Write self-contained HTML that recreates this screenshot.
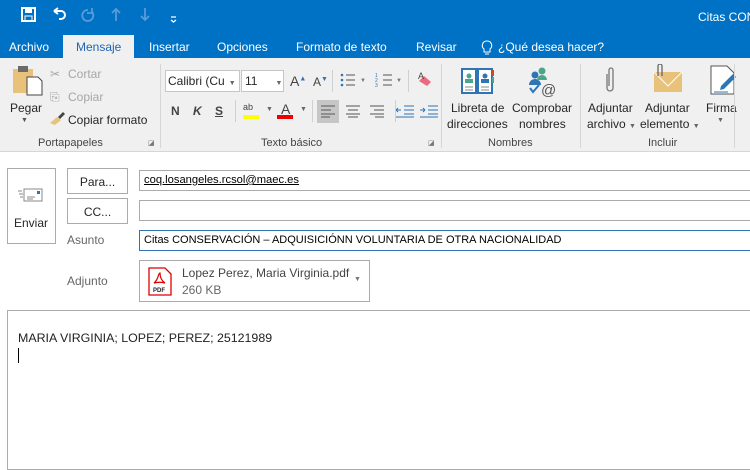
<!DOCTYPE html>
<html><head><meta charset="utf-8"><style>
*{margin:0;padding:0;box-sizing:border-box}
body{width:750px;height:460px;overflow:hidden;background:#fff;font-family:"Liberation Sans","DejaVu Sans",sans-serif;font-size:12px;color:#262626;position:relative}
.a{position:absolute;white-space:nowrap}
.top{left:0;top:0;width:750px;height:58px;background:#0072c6}
.tab{color:#fff;font-size:12px;top:40px}
.rib{left:0;top:58px;width:750px;height:94px;background:#f0f0f0;border-bottom:1px solid #d6d6d6}
.sep{width:1px;background:#d6d6d6;top:64px;height:84px}
.gl{color:#444;font-size:11px;top:137px}
.btn{border:1px solid #ababab;background:#fff}
.fld{border:1px solid #ababab;border-right:none;background:#fff}
.lbl{color:#666;font-size:12px}
.dis{color:#a6a6a6}
</style></head><body>
<div class="a top"></div>
<svg class="a" style="left:20px;top:6px" width="160" height="20">
<rect x="2" y="2" width="13" height="13" fill="none" stroke="#fff" stroke-width="2"/><rect x="5" y="2" width="7" height="5" fill="#fff"/><rect x="5" y="10" width="7" height="5" fill="none" stroke="#fff" stroke-width="1"/>
<path d="M34 5 l4 -3 M34 5 l4 3 M34 5 h7 a4 4 0 0 1 0 8 h-2" fill="none" stroke="#fff" stroke-width="2"/>
<path d="M68 4 a5.5 5.5 0 1 0 4 2 M72 2 v5 h-5" fill="none" stroke="#5a9bd8" stroke-width="1.8"/>
<path d="M96 15 V3 M92 7 l4 -4 4 4" fill="none" stroke="#5a9bd8" stroke-width="1.8"/>
<path d="M125 2 V14 M121 10 l4 4 4 -4" fill="none" stroke="#5a9bd8" stroke-width="1.8"/>
<path d="M151 11 h5 M151 14 l2.5 2 2.5 -2" fill="none" stroke="#fff" stroke-width="1.3"/>
</svg>
<div class="a" style="left:698px;top:10px;color:#fff;font-size:12px">Citas CON</div>
<div class="a" style="left:63px;top:35px;width:71px;height:24px;background:#f0f0f0"></div>
<div class="a tab" style="left:9px">Archivo</div>
<div class="a tab" style="left:76px;color:#1e64b4">Mensaje</div>
<div class="a tab" style="left:149px">Insertar</div>
<div class="a tab" style="left:217px">Opciones</div>
<div class="a tab" style="left:296px">Formato de texto</div>
<div class="a tab" style="left:416px">Revisar</div>
<svg class="a" style="left:481px;top:40px" width="12" height="15"><path d="M6 1 a4.5 4.5 0 0 0 -3 8 v3 h6 v-3 a4.5 4.5 0 0 0 -3 -8z M4 14 h4" fill="none" stroke="#fff" stroke-width="1"/></svg>
<div class="a tab" style="left:498px">¿Qué desea hacer?</div>
<div class="a rib"></div>
<svg class="a" style="left:12px;top:64px" width="32" height="34"><rect x="1" y="5" width="20" height="24" fill="#e8c27a"/><rect x="6" y="2" width="10" height="6" fill="#6b6b6b"/><path d="M15 13 h11 l4 4 v14 h-15z" fill="#fff" stroke="#444"/></svg>
<div class="a" style="left:10px;top:101px;font-size:12px">Pegar</div>
<div class="a" style="left:21px;top:117px;font-size:7px;color:#555">▼</div>
<div class="a dis" style="left:50px;top:67px">✂</div>
<div class="a dis" style="left:68px;top:67px">Cortar</div>
<div class="a dis" style="left:50px;top:90px">⎘</div>
<div class="a dis" style="left:68px;top:90px">Copiar</div>
<svg class="a" style="left:49px;top:111px" width="16" height="14"><path d="M1 12 l7 -6 4 3 -6 5z" fill="#e8c27a"/><path d="M9 6 l5 -5 2 2 -5 5z" fill="#444"/></svg>
<div class="a" style="left:68px;top:113px">Copiar formato</div>
<div class="a gl" style="left:38px">Portapapeles</div>
<div class="a" style="left:148px;top:139px;font-size:7px;color:#777">◪</div>
<div class="a sep" style="left:160px"></div>
<div class="a" style="left:165px;top:70px;width:75px;height:22px;background:#fff;border:1px solid #c6c6c6;font-size:12px;padding:3px 2px">Calibri (Cu<span style="font-size:7px;color:#666;margin-left:4px">▼</span></div>
<div class="a" style="left:241px;top:70px;width:43px;height:22px;background:#fff;border:1px solid #c6c6c6;font-size:12px;padding:3px 3px">11<span style="font-size:7px;color:#666;margin-left:18px">▼</span></div>
<div class="a" style="left:290px;top:73px;font-size:14px;color:#444">A<sup style="font-size:7px;color:#2e75b6">▲</sup></div>
<div class="a" style="left:313px;top:75px;font-size:12px;color:#444">A<sup style="font-size:7px;color:#2e75b6">▼</sup></div>
<div class="a" style="left:332px;top:70px;width:1px;height:22px;background:#d0d0d0"></div>
<svg class="a" style="left:340px;top:72px" width="64" height="18"><g fill="#2e75b6"><circle cx="2" cy="3" r="1.3"/><circle cx="2" cy="8" r="1.3"/><circle cx="2" cy="13" r="1.3"/></g><path d="M6 3h9M6 8h9M6 13h9M43 3h9M43 8h9M43 13h9" stroke="#555"/><text x="20" y="10" font-size="6" fill="#777">▼</text><text x="35" y="5" font-size="5" fill="#2e75b6">1</text><text x="35" y="10" font-size="5" fill="#2e75b6">2</text><text x="35" y="15" font-size="5" fill="#2e75b6">3</text><text x="56" y="10" font-size="6" fill="#777">▼</text></svg>
<div class="a" style="left:408px;top:70px;width:1px;height:22px;background:#d0d0d0"></div>
<svg class="a" style="left:416px;top:70px" width="18" height="18"><path d="M3 11 l5 -5 7 6 -4 4z" fill="#ea6a80"/><text x="2" y="9" font-size="9" fill="#444" font-family="Liberation Sans">A</text></svg>
<div class="a" style="left:171px;top:104px;font-weight:bold;color:#444">N</div>
<div class="a" style="left:193px;top:104px;font-weight:bold;font-style:italic;color:#444">K</div>
<div class="a" style="left:215px;top:104px;font-weight:bold;text-decoration:underline;color:#444">S</div>
<div class="a" style="left:235px;top:100px;width:1px;height:22px;background:#d0d0d0"></div>
<div class="a" style="left:243px;top:102px;font-size:9px;color:#444">ab</div>
<div class="a" style="left:243px;top:115px;width:16px;height:4px;background:#ffff00"></div>
<div class="a" style="left:266px;top:106px;font-size:7px;color:#666">▼</div>
<div class="a" style="left:281px;top:101px;font-size:14px;color:#444">A</div>
<div class="a" style="left:277px;top:115px;width:16px;height:4px;background:#e00"></div>
<div class="a" style="left:300px;top:106px;font-size:7px;color:#666">▼</div>
<div class="a" style="left:312px;top:100px;width:1px;height:22px;background:#d0d0d0"></div>
<div class="a" style="left:317px;top:100px;width:22px;height:23px;background:#c6c6c6"></div>
<svg class="a" style="left:320px;top:104px" width="120" height="14" stroke="#555" stroke-width="1"><path d="M1 2h14M1 6h10M1 10h14M1 13h9"/><path d="M26 2h14M28 6h10M26 10h14M28 13h10"/><path d="M50 2h14M54 6h10M50 10h14M55 13h9"/><path d="M76 6h5M76 6l2-2M76 6l2 2M84 2h10M84 6h10M84 10h10M76 13h18" stroke="#2e75b6"/><path d="M100 6h5M105 6l-2-2M105 6l-2 2M108 2h10M108 6h10M108 10h10M100 13h18" stroke="#2e75b6"/></svg>
<div class="a" style="left:395px;top:100px;width:1px;height:22px;background:#d0d0d0"></div>
<div class="a gl" style="left:261px">Texto básico</div>
<div class="a" style="left:428px;top:139px;font-size:7px;color:#777">◪</div>
<div class="a sep" style="left:441px"></div>
<svg class="a" style="left:460px;top:66px" width="34" height="30"><path d="M2 3h14v24H2z M18 3h14v24H18z" fill="#fff" stroke="#2e75b6" stroke-width="2"/><circle cx="9" cy="10" r="2.5" fill="#4aa58a"/><rect x="5" y="13" width="8" height="4" fill="#4aa58a"/><circle cx="25" cy="10" r="2.5" fill="#2e75b6"/><rect x="21" y="13" width="8" height="4" fill="#2e75b6"/><path d="M5 21h8M5 24h8M21 21h8M21 24h8" stroke="#888"/><rect x="32" y="4" width="2" height="6" fill="#d04b2a"/><rect x="32" y="11" width="2" height="6" fill="#4aa58a"/></svg>
<svg class="a" style="left:527px;top:66px" width="34" height="32"><circle cx="15" cy="5" r="3.5" fill="#4aa58a"/><path d="M10 14a5 5 0 0 1 10 0z" fill="#4aa58a"/><circle cx="8" cy="9" r="3.5" fill="#2e75b6"/><path d="M2 19a6 6 0 0 1 12 0z" fill="#2e75b6"/><path d="M3 22l3 4 6-7" stroke="#2e75b6" stroke-width="2" fill="none"/><text x="14" y="29" font-size="15" fill="#555" font-family="Liberation Sans">@</text></svg>
<div class="a" style="left:451px;top:101px">Libreta de</div>
<div class="a" style="left:447px;top:117px">direcciones</div>
<div class="a" style="left:512px;top:101px">Comprobar</div>
<div class="a" style="left:519px;top:117px">nombres</div>
<div class="a gl" style="left:488px">Nombres</div>
<div class="a sep" style="left:580px"></div>
<svg class="a" style="left:603px;top:66px" width="14" height="30"><path d="M4 8v14a3 3 0 0 0 6 0V4a2 2 0 0 0-4 0v16" fill="none" stroke="#777" stroke-width="1.3"/></svg>
<svg class="a" style="left:652px;top:64px" width="32" height="30"><rect x="2" y="8" width="28" height="20" fill="#e8c27a"/><path d="M2 8 L16 22 30 8" fill="none" stroke="#fff"/><path d="M6 12V2a2 2 0 0 1 4 0v10" fill="none" stroke="#666" stroke-width="1.3"/></svg>
<svg class="a" style="left:709px;top:64px" width="30" height="32"><path d="M2 2h16l7 7v21H2z" fill="#fff" stroke="#555"/><path d="M12 22l12-12 3 3-12 12-4 1z" fill="#2e75b6"/><path d="M5 28h14" stroke="#2e75b6"/></svg>
<div class="a" style="left:588px;top:101px">Adjuntar</div>
<div class="a" style="left:587px;top:117px">archivo <span style="font-size:7px;color:#666">▼</span></div>
<div class="a" style="left:645px;top:101px">Adjuntar</div>
<div class="a" style="left:640px;top:117px">elemento <span style="font-size:7px;color:#666">▼</span></div>
<div class="a" style="left:706px;top:101px">Firma</div>
<div class="a" style="left:717px;top:117px;font-size:7px;color:#666">▼</div>
<div class="a gl" style="left:648px">Incluir</div>
<div class="a sep" style="left:734px"></div>
<div class="a btn" style="left:7px;top:168px;width:49px;height:76px"></div>
<svg class="a" style="left:16px;top:188px" width="30" height="16"><rect x="8" y="1" width="18" height="12" fill="#fff" stroke="#888"/><rect x="21" y="3" width="3" height="3" fill="#2e75b6"/><path d="M11 9h8M11 11h6M2 3h4M3 6h4M4 9h3" stroke="#888"/></svg>
<div class="a" style="left:14px;top:216px">Enviar</div>
<div class="a btn" style="left:67px;top:168px;width:61px;height:26px;text-align:center;padding-top:6px">Para...</div>
<div class="a btn" style="left:67px;top:198px;width:61px;height:26px;text-align:center;padding-top:6px">CC...</div>
<div class="a fld" style="left:139px;top:170px;width:611px;height:21px;padding:3px 4px;text-decoration:underline;color:#000;font-size:11.2px">coq.losangeles.rcsol@maec.es</div>
<div class="a fld" style="left:139px;top:200px;width:611px;height:21px"></div>
<div class="a lbl" style="left:67px;top:233px">Asunto</div>
<div class="a fld" style="left:139px;top:230px;width:611px;height:21px;border-color:#2e75b6;padding:3px 4px;color:#000;font-size:11px">Citas CONSERVACIÓN – ADQUISICIÓNN VOLUNTARIA DE OTRA NACIONALIDAD</div>
<div class="a lbl" style="left:67px;top:274px">Adjunto</div>
<div class="a" style="left:139px;top:260px;width:231px;height:42px;border:1px solid #ababab;background:#fff"></div>
<svg class="a" style="left:147px;top:267px" width="26" height="30"><path d="M2 1h16l6 6v21H2z" fill="#fff" stroke="#d00" stroke-width="1.3"/><path d="M13 6c-2 0-1 6-6 10 4-1 8-1 11 0-3-2-5-5-5-10z" fill="none" stroke="#d00" stroke-width="1.2"/><text x="6" y="25" font-size="6" font-weight="bold" fill="#222" font-family="Liberation Sans">PDF</text></svg>
<div class="a" style="left:182px;top:266px;color:#444">Lopez Perez, Maria Virginia.pdf</div>
<div class="a" style="left:182px;top:283px;color:#666">260 KB</div>
<div class="a" style="left:354px;top:276px;font-size:7px;color:#777">▼</div>
<div class="a" style="left:7px;top:310px;width:743px;height:160px;border:1px solid #ababab;border-right:none;background:#fff"></div>
<div class="a" style="left:18px;top:331px;font-size:12.4px;color:#222">MARIA VIRGINIA; LOPEZ; PEREZ; 25121989</div>
<div class="a" style="left:18px;top:348px;width:1px;height:15px;background:#000"></div>
</body></html>
